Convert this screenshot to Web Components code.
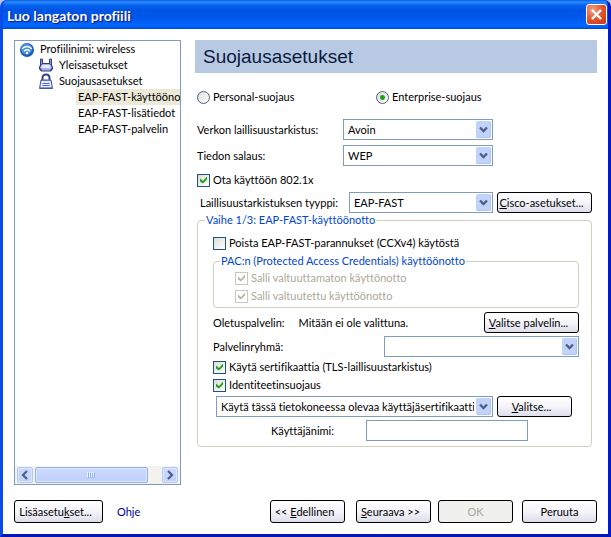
<!DOCTYPE html>
<html lang="fi">
<head>
<meta charset="utf-8">
<title>Luo langaton profiili</title>
<style>
    html, body{
        margin: 0;
        height: 100%;
    }
    body{
        background: #b9c6e8;
        color: #000;
        font: 11px/14px Lato, "Liberation Sans", Arial, sans-serif;
        font-variant-ligatures: none;
    }
</style>
</head>
<body>

<template id="xp-window">
    <style>
        :host{
            display: flex;
            flex-direction: column;
            min-height: 100%;
            box-sizing: border-box;
            border: solid #0831d9;
            border-width: 0 3px 3px;
            border-color: #0a3be0 #0019cf #0019b5 #0a4bea;
            border-radius: 7px 7px 0 0;
            background: #0a4bea;
            overflow: hidden;
        }
        header{
            display: flex;
            align-items: center;
            justify-content: space-between;
            height: 29px;
            padding: 0 2px 0 5px;
            margin: 0 -1px;
            background: linear-gradient(#0a5ae8, #2c8cff 7%, #0463ee 18%, #0054e3 35%, #0057ea 60%, #0066ff 85%, #0062f8 93%, #0143cf);
        }
        h1{
            margin: 0;
            padding-top: 2px;
            color: #fff;
            font-size: 14px;
            line-height: 16px;
            text-shadow: 1px 1px 1px #0f1089;
        }
        button{
            display: flex;
            align-items: center;
            justify-content: center;
            width: 21px;
            height: 21px;
            padding: 0;
            border: 1px solid #fff;
            border-radius: 3px;
            background: radial-gradient(circle at 30% 25%, #f0a088, #e0552f 50%, #c5340f);
        }
        main{
            flex: 1;
            display: flex;
            flex-direction: column;
            padding: 11px;
            background: #fff;
        }
    </style>
    <header>
        <h1></h1>
        <button type="button" aria-label="Sulje">
            <svg width="13" height="13" viewBox="0 0 13 13"><path d="M2 2l9 9M11 2l-9 9" stroke="#fff" stroke-width="2.4"/></svg>
        </button>
    </header>
    <main><slot></slot></main>
</template>

<template id="xp-wizard">
    <style>
        :host{
            flex: 1;
            display: grid;
            grid-template-columns: 167px 1fr;
            grid-template-rows: 1fr auto;
            gap: 15px 14px;
        }
        .page{
            display: flex;
            flex-direction: column;
        }
        footer{
            grid-column: 1 / 3;
            display: flex;
            align-items: center;
        }
    </style>
    <slot name="tree"></slot>
    <div class="page"><slot></slot></div>
    <footer><slot name="footer"></slot></footer>
</template>

<template id="xp-tree">
    <style>
        :host{
            display: flex;
            flex-direction: column;
            justify-content: space-between;
            border: 1px solid #7f9db9;
            background: #fff;
            overflow: hidden;
        }
        .items{
            padding-left: 4px;
        }
        .scroll{
            display: grid;
            grid-template-columns: 16px 1fr 16px;
            gap: 2px;
            height: 16px;
            padding: 1px 2px;
            background: #f3f2ec;
        }
        button, .thumb{
            display: flex;
            align-items: center;
            justify-content: center;
            box-sizing: border-box;
            height: 16px;
            padding: 0;
            border: 1px solid #b4c8f6;
            border-radius: 2px;
            background: linear-gradient(#cbdafd, #bfd0fb);
            box-shadow: inset 0 0 0 1px #dce6fe;
        }
        .thumb{
            width: 90%;
            border-color: #98b0e8;
        }
    </style>
    <div class="items" role="tree"><slot></slot></div>
    <div class="scroll">
        <button type="button" aria-label="Vasemmalle"><svg width="8" height="10" viewBox="0 0 8 10"><path d="M6 1L2 5l4 4" fill="none" stroke="#4d6185" stroke-width="2.2"/></svg></button>
        <div class="thumb"><svg width="8" height="6" viewBox="0 0 8 6"><path d="M.5 0v5M2.500 0v5M4.500 0v5M6.500 0v5" stroke="#eef4fe"/><path d="M1.500 1v5M3.500 1v5M5.500 1v5M7.500 1v5" stroke="#8cb0f8"/></svg></div>
        <button type="button" aria-label="Oikealle"><svg width="8" height="10" viewBox="0 0 8 10"><path d="M2 1l4 4-4 4" fill="none" stroke="#4d6185" stroke-width="2.2"/></svg></button>
    </div>
</template>

<template id="xp-tree-item">
    <style>
        :host{
            display: block;
            white-space: nowrap;
        }
        .row{
            display: flex;
            gap: 3px;
            height: 16px;
            line-height: 16px;
        }
        .icon{
            width: 16px;
            height: 16px;
            flex: none;
        }
        .text{
            padding: 0 2px;
        }
        :host([selected]) .text{
            flex: 1;
            background: #ece9d8;
        }
        .children{
            padding-left: 19px;
        }
    </style>
    <div class="row" role="treeitem">
        <span class="icon"><slot name="icon"></slot></span>
        <span class="text"></span>
    </div>
    <div class="children" role="group"><slot></slot></div>
</template>

<template id="xp-button">
    <style>
        :host{
            display: block;
            width: 75px;
        }
        button{
            display: block;
            box-sizing: border-box;
            width: 100%;
            height: var(--button-height, 21px);
            padding: 0;
            border: 1px solid #000;
            border-radius: 3px;
            background: linear-gradient(#fff, #f4f4fa 50%, #dedeea);
            color: #000;
            font: inherit;
            white-space: nowrap;
        }
        :host([mnemonic]) button{
            padding-right: 6px;
        }
        button:disabled{
            background: #f0f0ee;
            color: #aca899;
        }
    </style>
    <button type="button"><slot></slot></button>
</template>

<template id="xp-option">
    <style>
        :host{
            display: flex;
            align-items: center;
            height: 16px;
        }
        label{
            padding-left: 3px;
            white-space: nowrap;
        }
        input{
            appearance: none;
            flex: none;
            width: 13px;
            height: 13px;
            margin: 0;
            border: 1px solid #1d5281;
            background: linear-gradient(135deg, #dcdcd7, #fff);
        }
        input[type=radio]{
            border-color: #4a6580;
            border-radius: 50%;
        }
        input[type=radio]:checked{
            background: radial-gradient(circle, #21a121 0 2px, transparent 3px), linear-gradient(135deg, #dcdcd7, #fff);
        }
        /* the tick is a clipped green square inside the box */
        input[type=checkbox]:checked::before{
            content: "";
            display: block;
            width: 7px;
            height: 7px;
            margin: 2px;
            background: #21a121;
            clip-path: polygon(0 29%, 43% 64%, 100% 0, 100% 43%, 43% 100%, 0 71%);
        }
        input:disabled{
            border-color: #cac8bb;
            background: #fff;
        }
        input[type=checkbox]:disabled::before{
            background: #b9b7a8;
        }
        input:disabled + label{
            color: #aca899;
        }
    </style>
    <input id="box"><label for="box"><slot></slot></label>
</template>

<template id="xp-combo">
    <style>
        :host{
            display: flex;
            align-items: center;
            justify-content: space-between;
        }
        label{
            white-space: nowrap;
        }
        label:empty{
            display: none;
        }
        .field{
            position: relative;
            width: var(--field-width, 150px);
        }
        select{
            appearance: none;
            display: block;
            box-sizing: border-box;
            width: 100%;
            height: 21px;
            padding: 0 18px 0 4px;
            border: 1px solid #7f9db9;
            border-radius: 0;
            background: #fff;
            color: #000;
            font: inherit;
        }
        svg{
            position: absolute;
            top: 2px;
            right: 2px;
            pointer-events: none;
        }
    </style>
    <label for="list"></label>
    <div class="field">
        <select id="list"></select>
        <svg width="15" height="17" viewBox="0 0 15 17">
            <rect width="15" height="17" rx="1.500" fill="#c1d3fb"/>
            <path d="M1 16.500h13M14.500 1v15" stroke="#aec4f4"/>
            <path d="M4 6.500l3.500 3.500L11 6.500" fill="none" stroke="#4d6185" stroke-width="2.4"/>
        </svg>
    </div>
</template>

<template id="xp-text">
    <style>
        :host{
            display: flex;
            align-items: center;
            justify-content: flex-end;
            gap: 32px;
        }
        input{
            box-sizing: border-box;
            width: 162px;
            height: 21px;
            padding: 0 4px;
            border: 1px solid #7f9db9;
            font: inherit;
        }
    </style>
    <label for="text"><slot></slot></label>
    <input id="text" type="text">
</template>

<template id="xp-group">
    <style>
        :host{
            display: block;
        }
        fieldset{
            display: flex;
            flex-direction: column;
            min-width: 0;
            margin: 0;
            padding: var(--group-padding, 8px 12px 5px 15px);
            border: 1px solid #d0d0bf;
            border-radius: 4px;
        }
        legend{
            margin-left: var(--legend-indent, -8px);
            padding: 0 1px;
            color: #0046d5;
            white-space: nowrap;
        }
    </style>
    <fieldset><legend></legend><slot></slot></fieldset>
</template>

<template id="security-page">
    <style>
        :host{
            display: block;
        }
        h2{
            margin: 0 0 16px;
            padding-left: 8px;
            background: #b8c9e3;
            color: #0a1a3c;
            font: 19px/33px "Liberation Sans", Arial, sans-serif;
        }
        .form{
            display: flex;
            flex-direction: column;
            padding: 0 5px 0 2px;
        }
        .modes{
            display: grid;
            grid-template-columns: 179px 1fr;
            margin-bottom: 14px;
        }
        .network{
            display: flex;
            flex-direction: column;
            gap: 5px;
            padding-right: 99px;
            margin-bottom: 6px;
        }
        .row{
            display: flex;
            align-items: center;
            gap: 4px;
        }
        .eap{
            margin-top: 4px;
            padding-left: 3px;
        }
        .eap xp-combo, .certificate xp-combo{
            flex: 1;
        }
        .eap xp-combo{
            --field-width: 144px;
        }
        .wide{
            width: 95px;
        }
        .pac{
            margin: 3px 0 4px;
            --group-padding: 2px 20px 3px 21px;
            --legend-indent: -15px;
        }
        .pac xp-option + xp-option{
            margin-top: 2px;
        }
        .server{
            margin-bottom: 3px;
        }
        .server span{
            flex: 1;
            padding-left: 10px;
        }
        .servers{
            --field-width: 195px;
            margin-bottom: 2px;
        }
        .certificate{
            --field-width: 100%;
            margin: 3px 0;
            padding: 0 7px 0 3px;
        }
        .identity + xp-option{
            margin-top: 2px;
        }
        .user{
            padding-right: 51px;
        }
    </style>
    <h2>Suojausasetukset</h2>
    <div class="form">
        <div class="modes">
            <xp-option type="radio">Personal-suojaus</xp-option>
            <xp-option type="radio" checked>Enterprise-suojaus</xp-option>
        </div>
        <div class="network">
            <xp-combo label="Verkon laillisuustarkistus:" value="Avoin"></xp-combo>
            <xp-combo label="Tiedon salaus:" value="WEP"></xp-combo>
        </div>
        <xp-option type="checkbox" checked>Ota käyttöön 802.1x</xp-option>
        <div class="row eap">
            <xp-combo label="Laillisuustarkistuksen tyyppi:" value="EAP-FAST"></xp-combo>
            <xp-button class="wide" mnemonic><u>C</u>isco-asetukset...</xp-button>
        </div>
        <xp-group label="Vaihe 1/3: EAP-FAST-käyttöönotto">
            <xp-option type="checkbox">Poista EAP-FAST-parannukset (CCXv4) käytöstä</xp-option>
            <xp-group class="pac" label="PAC:n (Protected Access Credentials) käyttöönotto">
                <xp-option type="checkbox" checked disabled>Salli valtuuttamaton käyttönotto</xp-option>
                <xp-option type="checkbox" checked disabled>Salli valtuutettu käyttöönotto</xp-option>
            </xp-group>
            <div class="row server">
                Oletuspalvelin: <span>Mitään ei ole valittuna.</span>
                <xp-button class="wide" mnemonic><u>V</u>alitse palvelin...</xp-button>
            </div>
            <xp-combo class="servers" label="Palvelinryhmä:"></xp-combo>
            <xp-option class="identity" type="checkbox" checked>Käytä sertifikaattia (TLS-laillisuustarkistus)</xp-option>
            <xp-option type="checkbox" checked>Identiteetinsuojaus</xp-option>
            <div class="row certificate">
                <xp-combo value="Käytä tässä tietokoneessa olevaa käyttäjäsertifikaattia"></xp-combo>
                <xp-button mnemonic><u>V</u>alitse...</xp-button>
            </div>
            <xp-text class="user">Käyttäjänimi:</xp-text>
        </xp-group>
    </div>
</template>

<template id="wizard-footer">
    <style>
        :host{
            flex: 1;
            display: flex;
            align-items: center;
            --button-height: 23px;
        }
        .more{
            width: 89px;
        }
        a{
            margin: 0 auto 0 14px;
            color: #0000a0;
            text-decoration: none;
        }
        .next{
            margin: 0 7px 0 11px;
        }
        .cancel{
            margin-left: 9px;
        }
    </style>
    <xp-button class="more" mnemonic>Lisäasetu<u>k</u>set...</xp-button>
    <a href="#ohje">Ohje</a>
    <xp-button mnemonic>&lt;&lt; <u>E</u>dellinen</xp-button>
    <xp-button class="next" mnemonic><u>S</u>euraava &gt;&gt;</xp-button>
    <xp-button disabled>OK</xp-button>
    <xp-button class="cancel">Peruuta</xp-button>
</template>

<xp-window label="Luo langaton profiili">
    <xp-wizard>
        <xp-tree slot="tree">
            <xp-tree-item label="Profiilinimi: wireless">
                <svg slot="icon" width="16" height="16" viewBox="0 0 16 16">
                    <circle cx="8" cy="9" r="7" fill="#1d5cba"/>
                    <circle cx="7.500" cy="8" r="5.500" fill="#4a91e2"/>
                    <g fill="none" stroke="#fff" stroke-width="1.300" stroke-linecap="round"><path d="M3.500 7.500q4.500-4 9 0M5.300 9.900q2.700-2.300 5.400 0"/></g>
                    <circle cx="8" cy="12" r="1.200" fill="#fff"/>
                </svg>
                <xp-tree-item label="Yleisasetukset">
                    <svg slot="icon" width="16" height="16" viewBox="0 0 16 16">
                        <path d="M2 2.500q0-1 1.500-1t1.500 1V6h6V2.500q0-1 1.500-1t1.500 1V8l1 2v2l-2 2.500H3L1 12v-2l1-2z" fill="#343d78"/>
                        <path d="M3.500 2.500V7M12.500 2.500V7" stroke="#8d98dc"/>
                        <path d="M3.500 7.500h9l1.500 3-2 3H4l-2-3z" fill="#a4b0ee"/>
                        <path d="M4.500 7.500h7l1 3.500h-9z" fill="#e6eaff"/>
                    </svg>
                </xp-tree-item>
                <xp-tree-item label="Suojausasetukset">
                    <svg slot="icon" width="16" height="16" viewBox="0 0 16 16">
                        <path d="M4.500 7V5q0-3.500 3.500-3.500T11.500 5v2" fill="none" stroke="#39457f" stroke-width="2"/>
                        <path d="M3 7h10l1.500 8.500h-13z" fill="#8292dc" stroke="#4a569a"/>
                        <path d="M3.500 8h9l1 6h-11z" fill="#e6eaff"/>
                        <path d="M4.500 10.500h7M4.500 12.500h7" stroke="#5b69b4"/>
                    </svg>
                    <xp-tree-item selected label="EAP-FAST-käyttööno"></xp-tree-item>
                    <xp-tree-item label="EAP-FAST-lisätiedot"></xp-tree-item>
                    <xp-tree-item label="EAP-FAST-palvelin"></xp-tree-item>
                </xp-tree-item>
            </xp-tree-item>
        </xp-tree>
        <security-page></security-page>
        <wizard-footer slot="footer"></wizard-footer>
    </xp-wizard>
</xp-window>

<script>
    class XpElement extends HTMLElement{
        constructor(){
            super();
            var shadowRoot = this.attachShadow({mode: 'open'});
            var template = document.getElementById(this.localName);
            shadowRoot.appendChild(template.content.cloneNode(true));
        }

        setText(selector){
            this.shadowRoot.querySelector(selector).textContent = this.getAttribute('label') || '';
        }
    }

    class XpWindow extends XpElement{
        connectedCallback(){
            this.setText('h1');
        }
    }

    class XpTreeItem extends XpElement{
        connectedCallback(){
            this.setText('.text');
        }
    }

    class XpGroup extends XpElement{
        connectedCallback(){
            this.setText('legend');
        }
    }

    class XpButton extends XpElement{
        connectedCallback(){
            this.shadowRoot.querySelector('button').disabled = this.hasAttribute('disabled');
        }
    }

    class XpOption extends XpElement{
        connectedCallback(){
            var input = this.shadowRoot.querySelector('input');
            input.type = this.getAttribute('type');
            input.checked = this.hasAttribute('checked');
            input.disabled = this.hasAttribute('disabled');
        }
    }

    class XpCombo extends XpElement{
        connectedCallback(){
            var value = this.getAttribute('value') || '';
            this.setText('label');
            this.shadowRoot.querySelector('select').replaceChildren(new Option(value));
        }
    }

    customElements.define('xp-window', XpWindow);
    customElements.define('xp-wizard', class extends XpElement{});
    customElements.define('xp-tree', class extends XpElement{});
    customElements.define('xp-tree-item', XpTreeItem);
    customElements.define('xp-button', XpButton);
    customElements.define('xp-option', XpOption);
    customElements.define('xp-combo', XpCombo);
    customElements.define('xp-text', class extends XpElement{});
    customElements.define('xp-group', XpGroup);
    customElements.define('security-page', class extends XpElement{});
    customElements.define('wizard-footer', class extends XpElement{});
</script>
</body>
</html>
